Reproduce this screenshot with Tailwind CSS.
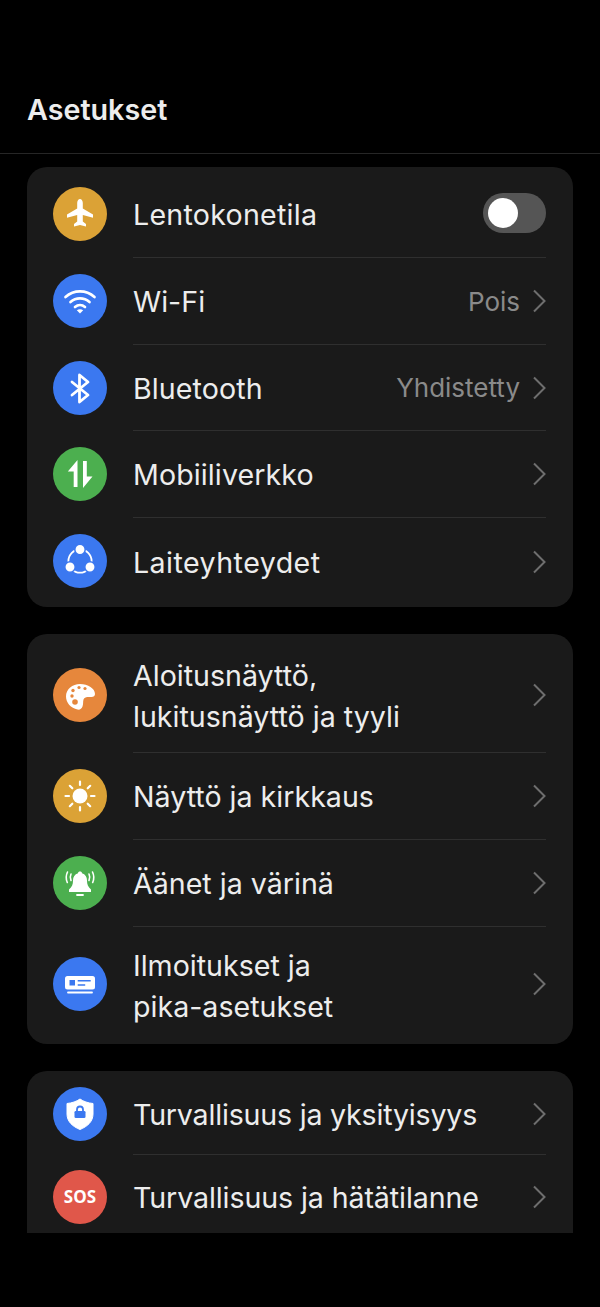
<!DOCTYPE html>
<html lang="fi">
<head>
  <meta charset="UTF-8">
  <meta name="viewport" content="width=device-width, initial-scale=1.0">
  <title>Asetukset</title>
  <script src="https://cdn.jsdelivr.net/npm/@tailwindcss/browser@4"></script>
</head>
<body class="bg-black w-[600px] h-[1307px] overflow-hidden font-['Inter',sans-serif] text-[#ededed]">

  <!-- Header -->
  <header class="h-[154px] pl-[27px] pt-[93px] border-b border-[#262626]">
    <h1 class="text-[28.7px] leading-[34px] font-semibold">Asetukset</h1>
  </header>

  <main class="px-[27px] pt-[13px]">

    <!-- Connections -->
    <section class="bg-[#1a1a1a] rounded-[20px] pt-[4px] h-[440px]">
      <div class="flex items-center h-[87px] pl-[26px] pr-[27px]">
        <div class="w-[54px] h-[54px] mb-[1px] rounded-full bg-[#dba236] flex items-center justify-center shrink-0">
          <svg class="w-[34px] h-[34px]" viewBox="0 0 34 34" fill="#fff"><path d="M17 2c1.600 0 2.800 1.800 2.800 4v5.500L30 17.500v3.200l-10.200-2.600v6.400l3.200 2.400v2.600L17 28l-6 1.500v-2.600l3.200-2.400v-6.400L4 20.700v-3.200l10.200-6V6c0-2.200 1.200-4 2.800-4z"/></svg>
        </div>
        <div class="flex items-center h-full flex-1 ml-[26px] border-b border-[#2f2f2f]">
          <span class="text-[28.6px] tracking-[0.25px] pt-[3px] flex-1">Lentokonetila</span>
          <div class="w-[63px] h-[40px] mb-[2px] rounded-full bg-[#555] flex items-center pl-[5px]">
            <div class="w-[30px] h-[30px] rounded-full bg-white"></div>
          </div>
        </div>
      </div>
      <div class="flex items-center h-[87px] pl-[26px] pr-[27px]">
        <div class="w-[54px] h-[54px] mb-[1px] rounded-full bg-[#3b78f0] flex items-center justify-center shrink-0">
          <svg class="w-[34px] h-[34px]" viewBox="0 0 34 34" fill="none" stroke="#fff" stroke-width="2.700" stroke-linecap="round"><path d="M2.500 13c8.500-7.500 20.500-7.500 29 0M7.500 18c5.500-4.800 13.500-4.800 19 0M12 23c3-2.500 7-2.500 10 0"/><path d="M17 29.500l-3.200-3.300c1.900-1.200 4.500-1.200 6.400 0z" fill="#fff" stroke="none"/></svg>
        </div>
        <div class="flex items-center h-full flex-1 ml-[26px] border-b border-[#2f2f2f]">
          <span class="text-[28.6px] pt-[3px] flex-1">Wi-Fi</span>
          <span class="text-[26px] text-[#8a8a8a] mr-[13px]">Pois</span>
          <svg class="w-[13px] h-[24px]" viewBox="0 0 13 24" fill="none" stroke="#6e6e6e" stroke-width="2"><path d="M1 1.500L11.500 12 1 22.500"/></svg>
        </div>
      </div>
      <div class="flex items-center h-[86px] pl-[26px] pr-[27px]">
        <div class="w-[54px] h-[54px] mb-[1px] rounded-full bg-[#3b78f0] flex items-center justify-center shrink-0">
          <svg class="w-[34px] h-[34px]" viewBox="0 0 34 34" fill="none" stroke="#fff" stroke-width="2.800" stroke-linejoin="round" stroke-linecap="round"><path d="M9 11L25 24l-8.500 7V4L25 11 9 24"/></svg>
        </div>
        <div class="flex items-center h-full flex-1 ml-[26px] border-b border-[#2f2f2f]">
          <span class="text-[28.6px] tracking-[0.1px] pt-[3px] flex-1">Bluetooth</span>
          <span class="text-[26px] text-[#8a8a8a] mr-[13px]">Yhdistetty</span>
          <svg class="w-[13px] h-[24px]" viewBox="0 0 13 24" fill="none" stroke="#6e6e6e" stroke-width="2"><path d="M1 1.500L11.500 12 1 22.500"/></svg>
        </div>
      </div>
      <div class="flex items-center h-[87px] pl-[26px] pr-[27px]">
        <div class="w-[54px] h-[54px] mb-[1px] rounded-full bg-[#4caf4f] flex items-center justify-center shrink-0">
          <svg class="w-[34px] h-[34px]" viewBox="0 0 34 34" fill="#fff"><path d="M14.500 3v27h-3.800V14.500H4.800z"/><path d="M20 31V4h3.800v15.500H29.500z"/></svg>
        </div>
        <div class="flex items-center h-full flex-1 ml-[26px] border-b border-[#2f2f2f]">
          <span class="text-[28.6px] tracking-[0.1px] pt-[3px] flex-1">Mobiiliverkko</span>
          <svg class="w-[13px] h-[24px]" viewBox="0 0 13 24" fill="none" stroke="#6e6e6e" stroke-width="2"><path d="M1 1.500L11.500 12 1 22.500"/></svg>
        </div>
      </div>
      <div class="flex items-center h-[87px] pl-[26px] pr-[27px]">
        <div class="w-[54px] h-[54px] mb-[1px] rounded-full bg-[#3b78f0] flex items-center justify-center shrink-0">
          <svg class="w-[34px] h-[34px]" viewBox="0 0 34 34"><circle cx="17" cy="17.100" r="11.600" fill="none" stroke="#fff" stroke-width="1.800"/><g fill="#fff" stroke="#3b78f0" stroke-width="1.500"><circle cx="17" cy="5.500" r="5.200"/><circle cx="7" cy="23" r="5.200"/><circle cx="27" cy="23" r="5.200"/></g></svg>
        </div>
        <div class="flex items-center h-full flex-1 ml-[26px]">
          <span class="text-[28.6px] tracking-[0.45px] pt-[3px] flex-1">Laiteyhteydet</span>
          <svg class="w-[13px] h-[24px]" viewBox="0 0 13 24" fill="none" stroke="#6e6e6e" stroke-width="2"><path d="M1 1.500L11.500 12 1 22.500"/></svg>
        </div>
      </div>
    </section>

    <!-- Display and sound -->
    <section class="bg-[#1a1a1a] rounded-[20px] pt-[3px] mt-[27px] h-[410px]">
      <div class="flex items-center h-[116px] pl-[26px] pr-[27px]">
        <div class="w-[54px] h-[54px] rounded-full bg-[#e6873c] flex items-center justify-center shrink-0">
          <svg class="w-[34px] h-[34px]" viewBox="0 0 34 34"><path fill="#fff" d="M17 6c8 0 15 4.500 15 10 0 2-1.500 3-3.500 3-3.500 0-7-.5-8 2.500-.7 2.500 0 4-1 7-.7 2.500-3 3.500-5 3C8 30 3 25 3 18.500 3 11 9.500 6 17 6z"/><g fill="#e6873c"><circle cx="12" cy="24" r="2.800"/><circle cx="9" cy="18" r="1.700"/><circle cx="10" cy="12.500" r="1.700"/><circle cx="16" cy="9.500" r="1.600"/><circle cx="22" cy="10.500" r="1.600"/></g></svg>
        </div>
        <div class="flex items-center h-full flex-1 ml-[26px] border-b border-[#2f2f2f]">
          <span class="text-[28.6px] leading-[41px] pt-[3px] flex-1">Aloitusnäyttö,<br>lukitusnäyttö ja tyyli</span>
          <svg class="w-[13px] h-[24px]" viewBox="0 0 13 24" fill="none" stroke="#6e6e6e" stroke-width="2"><path d="M1 1.500L11.500 12 1 22.500"/></svg>
        </div>
      </div>
      <div class="flex items-center h-[87px] pl-[26px] pr-[27px]">
        <div class="w-[54px] h-[54px] mb-[1px] rounded-full bg-[#dba236] flex items-center justify-center shrink-0">
          <svg class="w-[34px] h-[34px]" viewBox="0 0 34 34" fill="none" stroke="#fff" stroke-width="2.200" stroke-linecap="round"><circle cx="17" cy="17" r="7.500" fill="#fff" stroke="none"/><path d="M17 2.500v3.500M17 28v3.500M2.500 17H6M28 17h3.500M6.800 6.800l2.500 2.500M24.700 24.700l2.500 2.500M6.800 27.200l2.500-2.500M24.700 9.300l2.500-2.500"/></svg>
        </div>
        <div class="flex items-center h-full flex-1 ml-[26px] border-b border-[#2f2f2f]">
          <span class="text-[28.6px] pt-[3px] flex-1">Näyttö ja kirkkaus</span>
          <svg class="w-[13px] h-[24px]" viewBox="0 0 13 24" fill="none" stroke="#6e6e6e" stroke-width="2"><path d="M1 1.500L11.500 12 1 22.500"/></svg>
        </div>
      </div>
      <div class="flex items-center h-[87px] pl-[26px] pr-[27px]">
        <div class="w-[54px] h-[54px] mb-[1px] rounded-full bg-[#4caf4f] flex items-center justify-center shrink-0">
          <svg class="w-[34px] h-[34px]" viewBox="0 0 34 34"><path fill="#fff" d="M17 5.500c1.200 0 2 .7 2 1.700 3.300 1 5 3.800 5 7.300 0 4 1 6.500 4 9V26H6v-2.500c3-2.500 4-5 4-9 0-3.500 1.700-6.300 5-7.300 0-1 .8-1.700 2-1.700z"/><path fill="none" stroke="#fff" stroke-width="1.800" stroke-linecap="round" d="M14 29h6"/><path fill="none" stroke="#fff" stroke-width="1.600" stroke-linecap="round" d="M4.500 6C2.800 9.500 2.800 13 4.300 16.500M8 8c-1 2-1 4 0 6.500M29.500 6c1.700 3.500 1.700 7 .2 10.500M26 8c1 2 1 4 0 6.500"/></svg>
        </div>
        <div class="flex items-center h-full flex-1 ml-[26px] border-b border-[#2f2f2f]">
          <span class="text-[28.6px] pt-[3px] flex-1">Äänet ja värinä</span>
          <svg class="w-[13px] h-[24px]" viewBox="0 0 13 24" fill="none" stroke="#6e6e6e" stroke-width="2"><path d="M1 1.500L11.500 12 1 22.500"/></svg>
        </div>
      </div>
      <div class="flex items-center h-[114px] pl-[26px] pr-[27px]">
        <div class="w-[54px] h-[54px] mb-[1px] rounded-full bg-[#3b78f0] flex items-center justify-center shrink-0">
          <svg class="w-[34px] h-[34px]" viewBox="0 0 34 34"><rect x="2" y="9" width="30" height="13.500" rx="2.500" fill="#fff"/><rect x="6.500" y="13" width="5.500" height="5.500" fill="#3b78f0"/><path d="M14.700 13.700h13M14.700 18h7.500" stroke="#3b78f0" stroke-width="1.500"/><path d="M5 25.500h24" stroke="#fff" stroke-width="1.800" stroke-linecap="round"/></svg>
        </div>
        <div class="flex items-center h-full flex-1 ml-[26px]">
          <span class="text-[28.6px] leading-[41px] pt-[3px] flex-1">Ilmoitukset ja<br>pika-asetukset</span>
          <svg class="w-[13px] h-[24px]" viewBox="0 0 13 24" fill="none" stroke="#6e6e6e" stroke-width="2"><path d="M1 1.500L11.500 12 1 22.500"/></svg>
        </div>
      </div>
    </section>

    <!-- Security, cut off at the bottom bar -->
    <section class="bg-[#1a1a1a] rounded-t-[20px] mt-[27px] h-[162px] overflow-hidden">
      <div class="flex items-center h-[84px] pl-[26px] pr-[27px]">
        <div class="w-[54px] h-[54px] mt-[1px] rounded-full bg-[#3b78f0] flex items-center justify-center shrink-0">
          <svg class="w-[34px] h-[34px]" viewBox="0 0 34 34"><path fill="#fff" stroke="#fff" stroke-linejoin="round" d="M17 2c3.500 2.500 8 4 13 4.500v10.500c0 7.500-5.500 12.500-13 15.500C9.500 29.500 4 24.500 4 17V6.500c5-.5 9.500-2 13-4.500z"/><rect x="11.500" y="14" width="11" height="7" rx="1.300" fill="#3b78f0"/><path d="M14 14.500V12.500a3 3 0 016 0v2" fill="none" stroke="#3b78f0" stroke-width="1.800"/></svg>
        </div>
        <div class="flex items-center h-full flex-1 ml-[26px] border-b border-[#2f2f2f]">
          <span class="text-[28.6px] tracking-[-0.2px] pt-[6px] flex-1">Turvallisuus ja yksityisyys</span>
          <svg class="mt-[3px] w-[13px] h-[24px]" viewBox="0 0 13 24" fill="none" stroke="#6e6e6e" stroke-width="2"><path d="M1 1.500L11.500 12 1 22.500"/></svg>
        </div>
      </div>
      <div class="flex items-center h-[84px] pl-[26px] pr-[27px]">
        <div class="w-[54px] h-[54px] rounded-full bg-[#e0574a] flex items-center justify-center shrink-0">
          <span class="text-[17px] font-bold text-white font-['Open_Sans',sans-serif]">SOS</span>
        </div>
        <div class="flex items-center h-full flex-1 ml-[26px]">
          <span class="text-[28.6px] tracking-[-0.1px] pt-[3px] flex-1">Turvallisuus ja hätätilanne</span>
          <svg class="w-[13px] h-[24px]" viewBox="0 0 13 24" fill="none" stroke="#6e6e6e" stroke-width="2"><path d="M1 1.500L11.500 12 1 22.500"/></svg>
        </div>
      </div>
    </section>
  </main>
</body>
</html>
